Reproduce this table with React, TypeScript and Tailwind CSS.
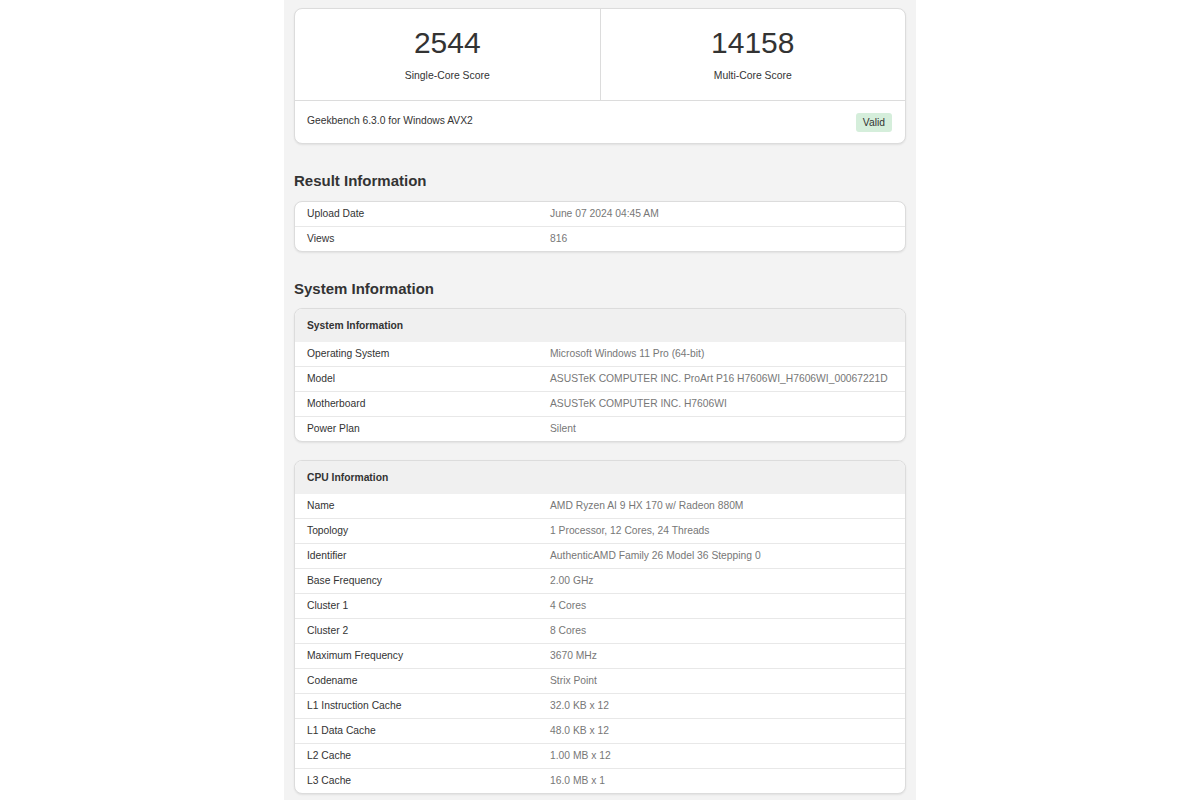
import React from 'react'

type Row = [string, string]

const resultRows: Row[] = [
  ['Upload Date', 'June 07 2024 04:45 AM'],
  ['Views', '816'],
]

const systemRows: Row[] = [
  ['Operating System', 'Microsoft Windows 11 Pro (64-bit)'],
  ['Model', 'ASUSTeK COMPUTER INC. ProArt P16 H7606WI_H7606WI_00067221D'],
  ['Motherboard', 'ASUSTeK COMPUTER INC. H7606WI'],
  ['Power Plan', 'Silent'],
]

const cpuRows: Row[] = [
  ['Name', 'AMD Ryzen AI 9 HX 170 w/ Radeon 880M'],
  ['Topology', '1 Processor, 12 Cores, 24 Threads'],
  ['Identifier', 'AuthenticAMD Family 26 Model 36 Stepping 0'],
  ['Base Frequency', '2.00 GHz'],
  ['Cluster 1', '4 Cores'],
  ['Cluster 2', '8 Cores'],
  ['Maximum Frequency', '3670 MHz'],
  ['Codename', 'Strix Point'],
  ['L1 Instruction Cache', '32.0 KB x 12'],
  ['L1 Data Cache', '48.0 KB x 12'],
  ['L2 Cache', '1.00 MB x 12'],
  ['L3 Cache', '16.0 MB x 1'],
]

function InfoRows({ rows }: { rows: Row[] }) {
  return (
    <div className="divide-y divide-[#e8e8e8]">
      {rows.map(([label, value]) => (
        <div key={label} className="box-content flex h-[24px] items-center text-[10.3px] whitespace-nowrap">
          <div className="w-[255px] shrink-0 pl-[12px] font-medium text-[#333]">{label}</div>
          <div className="text-[#777]">{value}</div>
        </div>
      ))}
    </div>
  )
}

function InfoCard({ title, rows }: { title?: string; rows: Row[] }) {
  return (
    <div className="overflow-hidden rounded-[8px] border border-[#dcdcdc] bg-white shadow-[0_1px_2px_rgba(0,0,0,0.08)]">
      {title && (
        <div className="flex h-[33px] items-center bg-[#f0f0f0] pl-[12px] text-[10.3px] font-bold text-[#333]">
          {title}
        </div>
      )}
      <InfoRows rows={rows} />
    </div>
  )
}

function Score({ value, label }: { value: string; label: string }) {
  return (
    <div className="flex flex-1 flex-col items-center pt-[17px]">
      <div className="text-[30px] leading-[34px] text-[#333]">{value}</div>
      <div className="mt-[8px] text-[10.4px] text-[#333]">{label}</div>
    </div>
  )
}

export default function App() {
  return (
    <div
      className="flex min-h-[800px] justify-center bg-white"
      style={{ fontFamily: '"Liberation Sans", Arial, sans-serif' }}
    >
      <div className="w-[632px] bg-[#f3f3f3] px-[10px] pt-[8px] pb-[6px]">
        {/* scores */}
        <div className="overflow-hidden rounded-[8px] border border-[#dcdcdc] bg-white shadow-[0_1px_2px_rgba(0,0,0,0.08)]">
          <div className="flex h-[92px] border-b border-[#dcdcdc]">
            <Score value="2544" label="Single-Core Score" />
            <div className="w-px bg-[#dcdcdc]" />
            <Score value="14158" label="Multi-Core Score" />
          </div>
          <div className="flex h-[42px] items-start justify-between pr-[13px] pl-[12px]">
            <span className="mt-[12px] text-[10.3px] text-[#333]">Geekbench 6.3.0 for Windows AVX2</span>
            <span className="mt-[12px] rounded-[3px] bg-[#d5eedb] px-[7px] py-[3px] text-[10.3px] leading-[13px] text-[#333]">
              Valid
            </span>
          </div>
        </div>

        <h2 className="mt-[28px] mb-[11px] text-[15px] leading-[18px] font-bold text-[#333]">Result Information</h2>
        <InfoCard rows={resultRows} />

        <h2 className="mt-[28px] mb-[10px] text-[15px] leading-[18px] font-bold text-[#333]">System Information</h2>
        <InfoCard title="System Information" rows={systemRows} />

        <div className="mt-[18px]">
          <InfoCard title="CPU Information" rows={cpuRows} />
        </div>
      </div>
    </div>
  )
}
